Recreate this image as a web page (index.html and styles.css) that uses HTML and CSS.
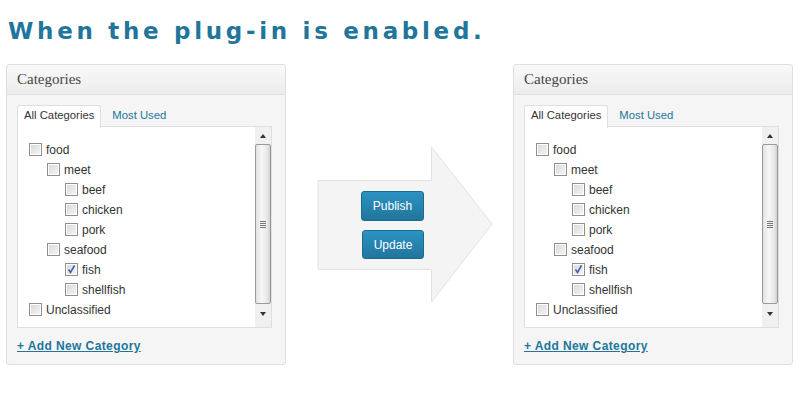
FILE: index.html
```html
<!DOCTYPE html>
<html>
<head>
<meta charset="utf-8">
<link rel="stylesheet" href="styles.css">
</head>
<body>
<h1 class="title">When the plug-in is enabled.</h1>
<div class="stage">
  <section class="box">
    <div class="box-head">Categories</div>
    <div class="box-body">
      <ul class="tabs">
        <li class="tab active">All Categories</li>
        <li class="tab">Most Used</li>
      </ul>
      <div class="list">
        <ul class="tree">
          <li><span class="cb"></span>food
            <ul>
              <li><span class="cb"></span>meet
                <ul>
                  <li><span class="cb"></span>beef</li>
                  <li><span class="cb"></span>chicken</li>
                  <li><span class="cb"></span>pork</li>
                </ul>
              </li>
              <li><span class="cb"></span>seafood
                <ul>
                  <li><span class="cb checked"><svg viewBox="0 0 13 13" width="13" height="13"><path d="M3.5 6.5 L5.5 9.5 L9.5 2.5" fill="none" stroke="#4a5fa8" stroke-width="1.6"/></svg></span>fish</li>
                  <li><span class="cb"></span>shellfish</li>
                </ul>
              </li>
            </ul>
          </li>
          <li><span class="cb"></span>Unclassified</li>
        </ul>
        <div class="scrollbar">
          <span class="sb-btn"><span class="tri-up"></span></span>
          <div class="sb-thumb"><span class="grip"></span></div>
          <span class="sb-btn down"><span class="tri-down"></span></span>
        </div>
      </div>
      <a class="add" href="#">+ Add New Category</a>
    </div>
  </section>

  <div class="arrow">
    <svg class="arrow-shape" width="176" height="158" viewBox="0 0 176 158">
      <polygon points="1,34.5 114.5,34.5 114.5,1 175,78 114.5,156 114.5,123.5 1,123.5" fill="#f4f4f4" stroke="#e2e2e2" stroke-width="1"/>
    </svg>
    <div class="arrow-buttons">
      <button class="btn publish">Publish</button>
      <button class="btn update">Update</button>
    </div>
  </div>

  <section class="box">
    <div class="box-head">Categories</div>
    <div class="box-body">
      <ul class="tabs">
        <li class="tab active">All Categories</li>
        <li class="tab">Most Used</li>
      </ul>
      <div class="list">
        <ul class="tree">
          <li><span class="cb"></span>food
            <ul>
              <li><span class="cb"></span>meet
                <ul>
                  <li><span class="cb"></span>beef</li>
                  <li><span class="cb"></span>chicken</li>
                  <li><span class="cb"></span>pork</li>
                </ul>
              </li>
              <li><span class="cb"></span>seafood
                <ul>
                  <li><span class="cb checked"><svg viewBox="0 0 13 13" width="13" height="13"><path d="M3.5 6.5 L5.5 9.5 L9.5 2.5" fill="none" stroke="#4a5fa8" stroke-width="1.6"/></svg></span>fish</li>
                  <li><span class="cb"></span>shellfish</li>
                </ul>
              </li>
            </ul>
          </li>
          <li><span class="cb"></span>Unclassified</li>
        </ul>
        <div class="scrollbar">
          <span class="sb-btn"><span class="tri-up"></span></span>
          <div class="sb-thumb"><span class="grip"></span></div>
          <span class="sb-btn down"><span class="tri-down"></span></span>
        </div>
      </div>
      <a class="add" href="#">+ Add New Category</a>
    </div>
  </section>
</div>
</body>
</html>
```

FILE: styles.css
```css
html, body {
  margin: 0;
  padding: 0;
  background: #ffffff;
}
body {
  font-family: "Liberation Sans", Arial, sans-serif;
  font-size: 12px;
  color: #333333;
}
.title {
  margin: 0;
  padding: 17px 0 0 8px;
  height: 28px;
  line-height: 28px;
  font-family: "DejaVu Sans", sans-serif;
  font-weight: bold;
  font-size: 23px;
  letter-spacing: 3.7px;
  color: #21759b;
}
.stage {
  display: flex;
  align-items: flex-start;
  margin-top: 19px;
  padding-left: 6px;
}
.box {
  width: 280px;
  box-sizing: border-box;
  border: 1px solid #dfdfdf;
  border-radius: 3px;
  background: #f5f5f5;
}
.box-head {
  height: 29px;
  line-height: 29px;
  padding-left: 10px;
  border-bottom: 1px solid #dfdfdf;
  background: linear-gradient(#f9f9f9, #ececec);
  font-family: "Liberation Serif", "Times New Roman", serif;
  font-size: 15px;
  color: #464646;
  border-radius: 3px 3px 0 0;
}
.box-body {
  padding: 10px 10px 10px 10px;
}
.tabs {
  list-style: none;
  margin: 0;
  padding: 0;
  display: flex;
  height: 21px;
}
.tab {
  height: 21px;
  line-height: 18px;
  padding: 0 6px;
  color: #21759b;
  border: 1px solid transparent;
  border-bottom: none;
  border-radius: 3px 3px 0 0;
  font-size: 11.3px;
}
.tab.active {
  background: #ffffff;
  border-color: #dfdfdf;
  color: #333333;
  position: relative;
  z-index: 1;
  margin-right: 4px;
  height: 22px;
}
.list {
  display: flex;
  height: 202px;
  box-sizing: border-box;
  border: 1px solid #dfdfdf;
  background: #ffffff;
  width: 255px;
}
.tree {
  flex: 1;
  list-style: none;
  margin: 0;
  padding: 13px 0 0 11px;
}
.tree ul {
  list-style: none;
  margin: 0;
  padding: 0 0 0 18px;
}
.tree li {
  line-height: 20px;
  color: #333333;
}
.cb {
  display: inline-block;
  box-sizing: border-box;
  width: 13px;
  height: 13px;
  border: 1px solid #8f8f8f;
  background: linear-gradient(135deg, #d8d8d8, #f6f6f6);
  box-shadow: inset 0 0 0 1px #ffffff;
  vertical-align: -2px;
  margin-right: 4px;
  position: relative;
}
.cb svg {
  position: absolute;
  left: -1px;
  top: -1px;
}
.scrollbar {
  width: 16px;
  display: flex;
  flex-direction: column;
  background: #f0f0f0;
}
.sb-btn {
  height: 17px;
  display: flex;
  align-items: center;
  justify-content: center;
}
.sb-btn.down {
  height: 20px;
}
.tri-up {
  width: 0;
  height: 0;
  border-left: 3.5px solid transparent;
  border-right: 3.5px solid transparent;
  border-bottom: 4px solid #333333;
}
.tri-down {
  width: 0;
  height: 0;
  border-left: 3.5px solid transparent;
  border-right: 3.5px solid transparent;
  border-top: 4px solid #333333;
}
.sb-thumb {
  height: 160px;
  box-sizing: border-box;
  border: 1px solid #9a9a9a;
  border-radius: 2px;
  background: linear-gradient(to right, #e2e2e2, #f6f6f6 40%, #e8e8e8 80%, #cfcfcf);
  display: flex;
  align-items: center;
  justify-content: center;
}
.grip {
  width: 6px;
  height: 7px;
  background: repeating-linear-gradient(#777 0 1px, transparent 1px 2px);
}
.add {
  display: inline-block;
  margin-top: 10px;
  line-height: 16px;
  font-weight: bold;
  font-size: 12px;
  letter-spacing: 0.4px;
  color: #21759b;
  text-decoration: underline;
}
.arrow {
  position: relative;
  width: 176px;
  height: 158px;
  margin: 82px 20px 0 31px;
}
.arrow-shape {
  display: block;
}
.arrow-buttons {
  position: absolute;
  left: 44px;
  top: 45px;
  width: 63px;
  display: flex;
  flex-direction: column;
  align-items: flex-end;
  gap: 9px;
}
.btn {
  box-sizing: border-box;
  border: 1px solid #1e6a8d;
  border-radius: 3px;
  background: linear-gradient(#2b93c4, #21759b);
  color: #ffffff;
  font-family: "Liberation Sans", Arial, sans-serif;
  font-size: 12px;
  padding: 0;
}
.publish {
  width: 63px;
  height: 30px;
}
.update {
  width: 62px;
  height: 29px;
}
```
